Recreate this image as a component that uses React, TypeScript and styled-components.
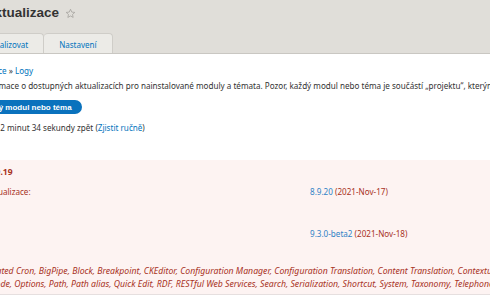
import styled, { createGlobalStyle } from 'styled-components';

const GlobalStyle = createGlobalStyle`
  html, body {
    margin: 0;
    padding: 0;
    overflow: hidden;
    background: #fff;
  }
  body {
    font-family: "Noto Sans", "DejaVu Sans", sans-serif;
    color: #333;
    font-size: 8.1px;
  }
`;

const Page = styled.div`
  width: 490px;
  height: 300px;
  overflow: hidden;
`;

const Column = styled.div`
  margin-left: -75px;
  width: 1100px;
`;

const Header = styled.header`
  background: #e0ded9;
  border-bottom: 1px solid #c9c7c2;
  height: 53px;
`;

const TitleRow = styled.div`
  display: flex;
  align-items: center;
  gap: 6px;
  padding-top: 5px;
  height: 16px;
`;

const Title = styled.h1`
  margin: 0 0 0 -4px;
  font-family: "Liberation Sans", Arial, sans-serif;
  font-size: 13.5px;
  line-height: 16px;
  font-weight: bold;
  color: #333;
`;

const Star = styled.svg`
  width: 11px;
  height: 11px;
  margin-top: 1px;
`;

const Tabs = styled.ul`
  display: flex;
  list-style: none;
  margin: 12px 0 0 -19px;
  padding: 0;
  height: 20px;
`;

const Tab = styled.li<{ $active?: boolean }>`
  display: flex;
  align-items: center;
  padding: 1px 15px 0;
  height: 20px;
  box-sizing: border-box;
  margin-bottom: ${({ $active }) => ($active ? '-1px' : '0')};
  background: ${({ $active }) => ($active ? '#fff' : '#ecebe7')};
  border: 1px solid #cfcdc8;
  border-bottom: none;
  border-left-width: 0;
  border-radius: 4px 4px 0 0;
  color: ${({ $active }) => ($active ? '#333' : '#0074bd')};
  font-size: 8px;
  &:first-child {
    border-left-width: 1px;
  }
`;

const Content = styled.main`
  padding-top: 11px;
`;

const Breadcrumb = styled.nav`
  line-height: 12px;
  height: 12px;
  a {
    color: #0074bd;
    text-decoration: none;
  }
`;

const Intro = styled.p`
  margin: 3px 0 0;
  line-height: 12px;
  white-space: nowrap;
`;

const ActionButton = styled.a`
  display: inline-flex;
  align-items: center;
  margin-top: 8px;
  height: 14px;
  padding: 0 10px 0 13px;
  border-radius: 8px;
  background: #0a72bd;
  color: #fff;
  font-family: "Liberation Sans", Arial, sans-serif;
  font-weight: bold;
  font-size: 8px;
  text-decoration: none;
`;

const Status = styled.p`
  margin: 8px 0 0;
  line-height: 12px;
  a {
    color: #0074bd;
    text-decoration: none;
  }
`;

const Project = styled.section`
  margin-top: 26px;
  background: #fdf3f2;
  border-bottom: 1px solid #e6dfdf;
  color: #a8321e;
  padding: 6px 0 3px;
`;

const ProjectTitle = styled.h2`
  margin: 0;
  padding-left: 12px;
  font-size: 8.5px;
  line-height: 12px;
  font-weight: bold;
`;

const VersionRow = styled.div<{ $gap: number }>`
  display: grid;
  grid-template-columns: 373px auto;
  padding-left: 12px;
  margin-top: ${({ $gap }) => $gap}px;
  line-height: 12px;
`;

const VersionLink = styled.a`
  color: #2f82c6;
  text-decoration: none;
`;

const Includes = styled.p`
  margin: 25px 0 0;
  padding-left: 7px;
  font-size: 8.7px;
  font-style: italic;
  line-height: 13px;
  white-space: nowrap;
`;

function StarIcon() {
  return (
    <Star viewBox="0 0 24 24" fill="none" stroke="#a09e99" strokeWidth="1.6" strokeLinejoin="round">
      <path d="M12 2.8l2.8 6.1 6.6.7-5 4.5 1.4 6.5L12 17.3l-5.8 3.3 1.4-6.5-5-4.5 6.6-.7z" />
    </Star>
  );
}

const versions = [
  { label: 'Doporučená aktualizace:', version: '8.9.20', date: '2021-Nov-17', gap: 8 },
  { label: 'Vývojová verze:', version: '9.3.0-beta2', date: '2021-Nov-18', gap: 30 },
];

export default function App() {
  return (
    <Page>
      <GlobalStyle />
      <Header>
        <Column>
          <TitleRow>
            <Title>Dostupné aktualizace</Title>
            <StarIcon />
          </TitleRow>
          <Tabs>
            <Tab $active>Seznam</Tab>
            <Tab>Aktualizovat</Tab>
            <Tab>Nastavení</Tab>
          </Tabs>
        </Column>
      </Header>
      <Column>
        <Content>
          <Breadcrumb>
            <a href="#">Domů</a> » <a href="#">Administrace</a> » <a href="#">Logy</a>
          </Breadcrumb>
          <Intro>
            Zde naleznete informace o dostupných aktualizacích pro nainstalované moduly a témata. Pozor, každý modul nebo
            téma je součástí „projektu“, kterým může mít stejný název, nebo se může jmenovat jinak.
          </Intro>
          <ActionButton href="#">+ Instalovat nový modul nebo téma</ActionButton>
          <Status>
            Poslední kontrola: 12 minut 34 sekundy zpět (<a href="#">Zjistit ručně</a>)
          </Status>
        </Content>
        <Project>
          <ProjectTitle>Drupal core 8.9.19</ProjectTitle>
          {versions.map((v) => (
            <VersionRow key={v.version} $gap={v.gap}>
              <span>{v.label}</span>
              <span>
                <VersionLink href="#">{v.version}</VersionLink> ({v.date})
              </span>
            </VersionRow>
          ))}
          <Includes>
            Zahrnuje: Automated Cron, BigPipe, Block, Breakpoint, CKEditor, Configuration Manager, Configuration
            Translation, Content Translation, Contextual Links, Custom Block, Datetime, Field, Field UI, File, Filter
            <br />
            Link, Menu UI, Node, Options, Path, Path alias, Quick Edit, RDF, RESTful Web Services, Search, Serialization,
            Shortcut, System, Taxonomy, Telephone, Text, Toolbar, User, Views, Views UI
          </Includes>
        </Project>
      </Column>
    </Page>
  );
}
